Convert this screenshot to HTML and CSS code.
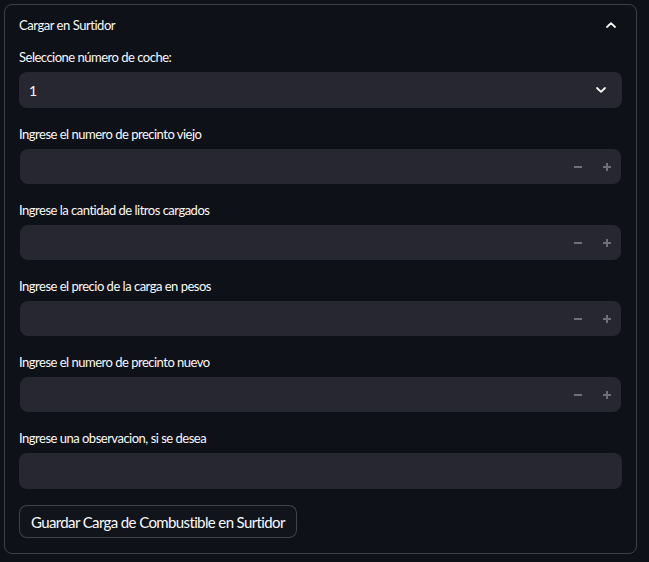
FILE: index.html
```html
<!DOCTYPE html>
<html lang="es">
<head>
<meta charset="utf-8">
<title>Cargar en Surtidor</title>
<link rel="stylesheet" href="styles.css">
</head>
<body>
<div class="expander">
  <div class="exp-header">
    <span class="exp-title">Cargar en Surtidor</span>
    <svg class="chev" width="10" height="6" viewBox="0 0 10 6"><polyline points="1,5 5,1.2 9,5" fill="none" stroke="#fafafa" stroke-width="1.8" stroke-linecap="round" stroke-linejoin="round"/></svg>
  </div>
  <div class="exp-body">
    <div class="widget">
      <label class="wlabel">Seleccione número de coche:</label>
      <div class="select">
        <span class="select-value">1</span>
        <svg class="chev" width="10" height="6" viewBox="0 0 10 6"><polyline points="1,1 5,4.8 9,1" fill="none" stroke="#fafafa" stroke-width="1.8" stroke-linecap="round" stroke-linejoin="round"/></svg>
      </div>
    </div>
    <div class="widget">
      <label class="wlabel">Ingrese el numero de precinto viejo</label>
      <div class="number">
        <div class="num-field"></div>
        <span class="step"><span class="minus"></span></span>
        <span class="step"><span class="plus"></span></span>
      </div>
    </div>
    <div class="widget">
      <label class="wlabel">Ingrese la cantidad de litros cargados</label>
      <div class="number">
        <div class="num-field"></div>
        <span class="step"><span class="minus"></span></span>
        <span class="step"><span class="plus"></span></span>
      </div>
    </div>
    <div class="widget">
      <label class="wlabel">Ingrese el precio de la carga en pesos</label>
      <div class="number">
        <div class="num-field"></div>
        <span class="step"><span class="minus"></span></span>
        <span class="step"><span class="plus"></span></span>
      </div>
    </div>
    <div class="widget">
      <label class="wlabel">Ingrese el numero de precinto nuevo</label>
      <div class="number">
        <div class="num-field"></div>
        <span class="step"><span class="minus"></span></span>
        <span class="step"><span class="plus"></span></span>
      </div>
    </div>
    <div class="widget">
      <label class="wlabel">Ingrese una observacion, si se desea</label>
      <div class="text-input"></div>
    </div>
    <div class="btn-row">
      <button class="btn">Guardar Carga de Combustible en Surtidor</button>
    </div>
  </div>
</div>
</body>
</html>
```
FILE: styles.css
```css
html, body {
  margin: 0;
  padding: 0;
  background: #0e1117;
  color: #fafafa;
  font-family: "Lato", "Noto Sans", sans-serif;
}
body {
  padding: 4px 12px 9px 4px;
}
.expander {
  width: 631px;
  border: 1px solid rgba(250, 250, 250, 0.2);
  border-radius: 8px;
  box-sizing: content-box;
}
.exp-header {
  height: 40px;
  display: flex;
  align-items: center;
  justify-content: space-between;
  padding: 0 20px 0 14px;
}
.exp-title {
  font-size: 13px;
  letter-spacing: -0.45px;
}
.chev {
  display: block;
}
.exp-body {
  display: flex;
  flex-direction: column;
  gap: 16px;
  padding: 2px 14px 15px 14px;
}
.widget {
  display: flex;
  flex-direction: column;
}
.wlabel {
  font-size: 13px;
  letter-spacing: -0.5px;
  line-height: 20px;
  height: 20px;
  margin-bottom: 5px;
}
.select {
  height: 36px;
  background: #262730;
  border-radius: 8px;
  display: flex;
  align-items: center;
  justify-content: space-between;
  padding: 0 16px 0 10px;
  box-sizing: border-box;
}
.select-value {
  font-size: 14px;
}
.number {
  height: 35px;
  margin: 0 1px;
  background: #262730;
  border-radius: 8px;
  display: flex;
  align-items: center;
}
.num-field {
  flex: 1;
}
.step {
  width: 29px;
  height: 35px;
  display: flex;
  align-items: center;
  justify-content: center;
}
.minus {
  width: 8px;
  height: 2px;
  background: #6d6f7b;
}
.plus {
  width: 8px;
  height: 8px;
  position: relative;
}
.plus::before, .plus::after {
  content: "";
  position: absolute;
  background: #6d6f7b;
}
.plus::before {
  left: 0;
  top: 3px;
  width: 8px;
  height: 2px;
}
.plus::after {
  left: 3px;
  top: 0;
  width: 2px;
  height: 8px;
}
.text-input {
  height: 36px;
  background: #262730;
  border-radius: 8px;
}
.btn-row {
  display: flex;
}
.btn {
  height: 33px;
  padding: 0 11px;
  background: #11141b;
  color: #fafafa;
  border: 1px solid rgba(250, 250, 250, 0.2);
  border-radius: 8px;
  font-family: "Lato", "Noto Sans", sans-serif;
  font-size: 15px;
  letter-spacing: -0.62px;
}
```
